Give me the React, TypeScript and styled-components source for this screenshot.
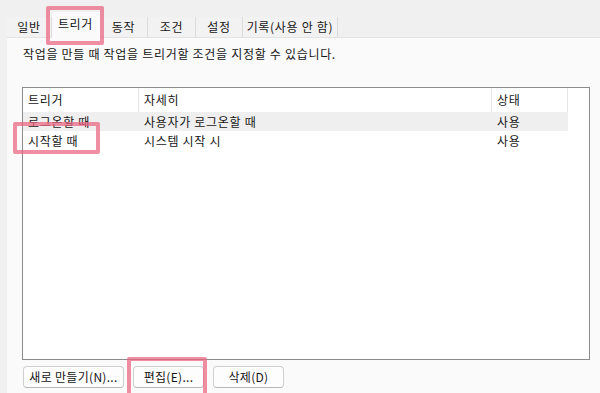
import React from "react";
import styled, { createGlobalStyle } from "styled-components";

const Global = createGlobalStyle`
  html, body { margin: 0; padding: 0; background: #f0f0f0; }
  body { font-family: "Noto Sans CJK KR", "Noto Sans", sans-serif; }
`;

const Window = styled.div`
  position: relative;
  width: 600px;
  height: 393px;
  overflow: hidden;
  background: #f0f0f0;
  display: flex;
  flex-direction: column;
  color: #161616;
  font-size: 12px;
  letter-spacing: 0.7px;
`;

const TabStrip = styled.div`
  display: flex;
  align-items: flex-end;
  height: 37px;
  padding-left: 7px;
  position: relative;
  z-index: 1;
`;

const Tab = styled.div<{ $active?: boolean; $w: number }>`
  box-sizing: border-box;
  width: ${(p) => p.$w}px;
  height: ${(p) => (p.$active ? 26 : 20)}px;
  display: flex;
  align-items: ${(p) => (p.$active ? "flex-start" : "center")};
  padding-top: ${(p) => (p.$active ? 4 : 0)}px;
  justify-content: center;
  background: ${(p) => (p.$active ? "#fafafa" : "#f2f2f2")};
  border-right: 1px solid ${(p) => (p.$active ? "transparent" : "#dcdcdc")};
  margin-bottom: ${(p) => (p.$active ? -1 : 0)}px;
  white-space: nowrap;
  line-height: 16px;
`;

const Panel = styled.div`
  flex: 1;
  margin-left: 7px;
  background: #fafafa;
  border-top: 1px solid #e3e3e3;
  display: flex;
  flex-direction: column;
  padding: 8px 0 0 15px;
`;

const Description = styled.div`
  line-height: 16px;
  padding-left: 1px;
`;

const ListBox = styled.div`
  box-sizing: border-box;
  margin-top: 25px;
  width: 568px;
  height: 273px;
  border: 1px solid #8c8c8c;
  background: #ffffff;
`;

const Row = styled.div<{ $header?: boolean; $shade?: boolean }>`
  display: grid;
  grid-template-columns: 116px 353px 76px;
  height: ${(p) => (p.$header ? 24 : 19)}px;
  width: 545px;
  background: ${(p) => (p.$shade ? "#efefef" : "#ffffff")};
`;

const Cell = styled.div<{ $header?: boolean }>`
  display: flex;
  align-items: center;
  padding-left: 5px;
  border-right: ${(p) => (p.$header ? "1px solid #e6e6e6" : "none")};
  white-space: nowrap;
  line-height: 16px;
`;

const ButtonBar = styled.div`
  display: flex;
  gap: 9px;
  margin-top: 6px;
  padding-left: 1px;
`;

const Button = styled.div<{ $w: number }>`
  box-sizing: border-box;
  width: ${(p) => p.$w}px;
  height: 22px;
  border: 1px solid #cfcfcf;
  border-bottom-color: #b8b8b8;
  border-radius: 4px;
  background: #fdfdfd;
  display: flex;
  align-items: center;
  justify-content: center;
  white-space: nowrap;
  line-height: 16px;
  letter-spacing: 0.3px;
`;

const Mark = styled.div<{ $x: number; $y: number; $w: number; $h: number }>`
  position: absolute;
  left: ${(p) => p.$x}px;
  top: ${(p) => p.$y}px;
  width: ${(p) => p.$w}px;
  height: ${(p) => p.$h}px;
  box-sizing: border-box;
  border: 4px solid rgba(234, 98, 128, 0.72);
  border-radius: 2px;
  pointer-events: none;
  z-index: 5;
`;

const tabs: [string, number][] = [
  ["일반", 45],
  ["트리거", 48],
  ["동작", 48],
  ["조건", 48],
  ["설정", 47],
  ["기록(사용 안 함)", 95],
];

const rows = [
  ["로그온할 때", "사용자가 로그온할 때", "사용"],
  ["시작할 때", "시스템 시작 시", "사용"],
];

export default function App() {
  return (
    <>
      <Global />
      <Window>
        <TabStrip>
          {tabs.map(([t, w]) => (
            <Tab key={t} $w={w} $active={t === "트리거"}>
              {t}
            </Tab>
          ))}
        </TabStrip>
        <Panel>
          <Description>작업을 만들 때 작업을 트리거할 조건을 지정할 수 있습니다.</Description>
          <ListBox>
            <Row $header>
              <Cell $header>트리거</Cell>
              <Cell $header>자세히</Cell>
              <Cell $header>상태</Cell>
            </Row>
            {rows.map((r, i) => (
              <Row key={i} $shade={i === 0}>
                {r.map((c, j) => (
                  <Cell key={j}>{c}</Cell>
                ))}
              </Row>
            ))}
          </ListBox>
          <ButtonBar>
            <Button $w={101}>새로 만들기(N)...</Button>
            <Button $w={71}>편집(E)...</Button>
            <Button $w={71}>삭제(D)</Button>
          </ButtonBar>
        </Panel>
        <Mark $x={46} $y={6} $w={58} $h={39} />
        <Mark $x={13} $y={122} $w={87} $h={32} />
        <Mark $x={127} $y={357} $w={80} $h={40} />
      </Window>
    </>
  );
}
